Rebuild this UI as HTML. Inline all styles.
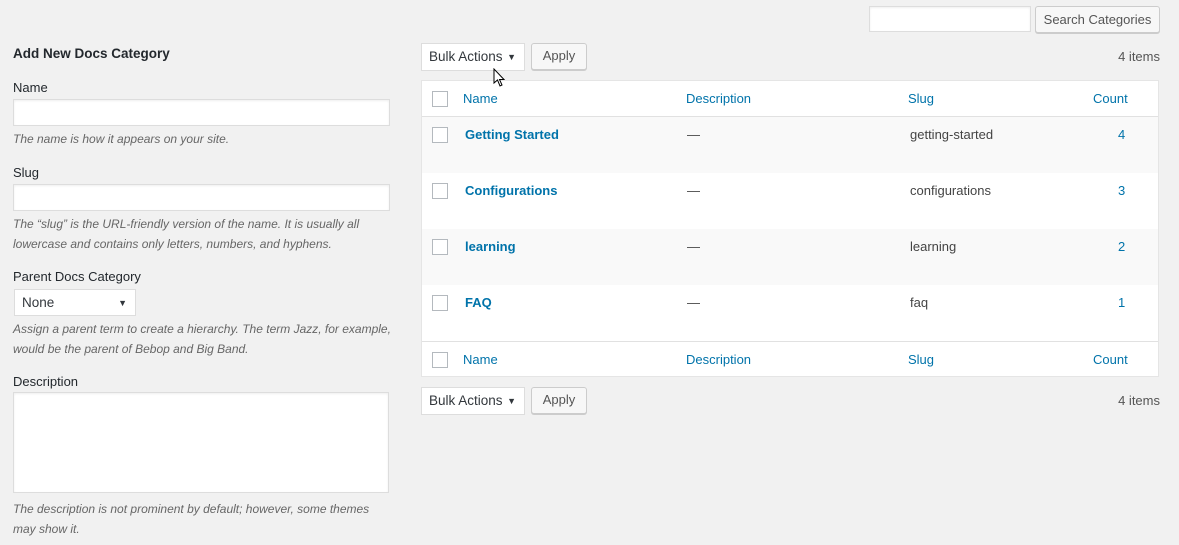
<!DOCTYPE html>
<html><head><meta charset="utf-8"><style>
*{box-sizing:border-box;margin:0;padding:0}
body{width:1179px;height:545px;background:#f1f1f1;font-family:"Liberation Sans",sans-serif;font-size:13px;color:#444;position:relative;overflow:hidden}
.a{position:absolute}
.lbl{font-size:13px;color:#23282d}
.inp{background:#fff;border:1px solid #ddd;box-shadow:inset 0 1px 2px rgba(0,0,0,.07)}
.hint{font-style:italic;color:#666;font-size:12px;line-height:20px}
.btn{background:#f7f7f7;border:1px solid #ccc;border-radius:3px;box-shadow:0 1px 0 #ccc;color:#555;font-size:13px;text-align:center;line-height:24px}
.sel{background:#fff;border:1px solid #ddd;color:#32373c;font-size:13.5px;padding-left:7px;line-height:26px}
.sel:after{content:"▼";position:absolute;right:8px;top:0;font-size:9px}
.tbl{left:421px;width:738px;background:#fff;border:1px solid #e5e5e5}
.row{position:absolute;left:0;width:736px;height:56px}
.cb{position:absolute;left:10px;width:16px;height:16px;border:1px solid #b4b9be;background:#fff}
.lnk{color:#0073aa}
.b{font-weight:bold;font-size:13px}
.h{font-size:13px}
</style></head><body>
<div class="a inp" style="left:869px;top:6px;width:162px;height:26px"></div>
<div class="a btn" style="left:1035px;top:6px;width:125px;height:27px;line-height:25px">Search Categories</div>

<div class="a" style="left:13px;top:46px;font-size:13.5px;font-weight:bold;color:#23282d">Add New Docs Category</div>
<div class="a lbl" style="left:13px;top:80px">Name</div>
<div class="a inp" style="left:13px;top:99px;width:377px;height:27px"></div>
<div class="a hint" style="left:13px;top:129px">The name is how it appears on your site.</div>
<div class="a lbl" style="left:13px;top:165px">Slug</div>
<div class="a inp" style="left:13px;top:184px;width:377px;height:27px"></div>
<div class="a hint" style="left:13px;top:214px">The “slug” is the URL-friendly version of the name. It is usually all<br>lowercase and contains only letters, numbers, and hyphens.</div>
<div class="a lbl" style="left:13px;top:269px">Parent Docs Category</div>
<div class="a sel" style="left:14px;top:289px;width:122px;height:27px">None</div>
<div class="a hint" style="left:13px;top:319px">Assign a parent term to create a hierarchy. The term Jazz, for example,<br>would be the parent of Bebop and Big Band.</div>
<div class="a lbl" style="left:13px;top:374px">Description</div>
<div class="a inp" style="left:13px;top:392px;width:376px;height:101px"></div>
<div class="a hint" style="left:13px;top:499px">The description is not prominent by default; however, some themes<br>may show it.</div>

<div class="a sel" style="left:421px;top:43px;width:104px;height:28px">Bulk Actions</div>
<div class="a btn" style="left:531px;top:43px;width:56px;height:27px">Apply</div>
<div class="a" style="right:19px;top:49px;color:#555">4 items</div>

<div class="a tbl" style="top:80px;height:297px">
 <div class="row" style="top:0;height:36px;border-bottom:1px solid #e1e1e1">
  <div class="cb" style="top:10px"></div>
  <div class="a lnk h" style="left:41px;top:10px">Name</div>
  <div class="a lnk h" style="left:264px;top:10px">Description</div>
  <div class="a lnk h" style="left:486px;top:10px">Slug</div>
  <div class="a lnk h" style="left:671px;top:10px">Count</div>
 </div>
 <div class="row" style="top:36px;background:#f9f9f9"><div class="cb" style="top:10px"></div><div class="a lnk b" style="left:43px;top:10px">Getting Started</div><div class="a" style="left:265px;top:10px">—</div><div class="a" style="left:488px;top:10px">getting-started</div><div class="a lnk" style="left:696px;top:10px">4</div></div>
 <div class="row" style="top:92px"><div class="cb" style="top:10px"></div><div class="a lnk b" style="left:43px;top:10px">Configurations</div><div class="a" style="left:265px;top:10px">—</div><div class="a" style="left:488px;top:10px">configurations</div><div class="a lnk" style="left:696px;top:10px">3</div></div>
 <div class="row" style="top:148px;background:#f9f9f9"><div class="cb" style="top:10px"></div><div class="a lnk b" style="left:43px;top:10px">learning</div><div class="a" style="left:265px;top:10px">—</div><div class="a" style="left:488px;top:10px">learning</div><div class="a lnk" style="left:696px;top:10px">2</div></div>
 <div class="row" style="top:204px"><div class="cb" style="top:10px"></div><div class="a lnk b" style="left:43px;top:10px">FAQ</div><div class="a" style="left:265px;top:10px">—</div><div class="a" style="left:488px;top:10px">faq</div><div class="a lnk" style="left:696px;top:10px">1</div></div>
 <div class="row" style="top:260px;height:36px;border-top:1px solid #e1e1e1">
  <div class="cb" style="top:10px"></div>
  <div class="a lnk h" style="left:41px;top:10px">Name</div>
  <div class="a lnk h" style="left:264px;top:10px">Description</div>
  <div class="a lnk h" style="left:486px;top:10px">Slug</div>
  <div class="a lnk h" style="left:671px;top:10px">Count</div>
 </div>
</div>

<div class="a sel" style="left:421px;top:387px;width:104px;height:28px">Bulk Actions</div>
<div class="a btn" style="left:531px;top:387px;width:56px;height:27px">Apply</div>
<div class="a" style="right:19px;top:393px;color:#555">4 items</div>

<svg class="a" style="left:493px;top:68px" width="14" height="20" viewBox="0 0 14 20"><path d="M1 1 L1 15 L4.5 12 L7 18 L9 17 L6.5 11.5 L11 11.5 Z" fill="#fff" stroke="#000" stroke-width="1"/></svg>
</body></html>
